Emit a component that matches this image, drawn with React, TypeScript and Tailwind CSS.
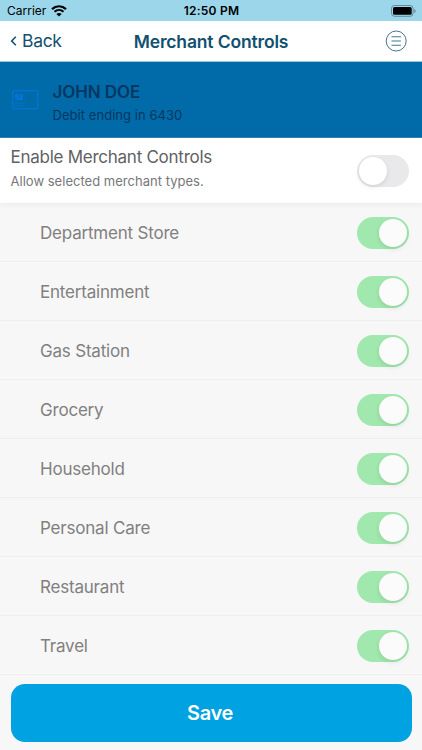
const merchants = [
  "Department Store",
  "Entertainment",
  "Gas Station",
  "Grocery",
  "Household",
  "Personal Care",
  "Restaurant",
  "Travel",
];

function Toggle({ on }: { on: boolean }) {
  return (
    <button
      role="switch"
      aria-checked={on}
      className={
        "flex h-8 w-[52px] shrink-0 items-center rounded-full px-0.5 " +
        (on ? "justify-end bg-[#a0e8ad]" : "justify-start bg-[#e9e9eb]")
      }
    >
      <span
        className={
          "size-7 rounded-full shadow-[0_2px_5px_rgba(0,0,0,0.1)] " +
          (on ? "bg-[#fbfbfb]" : "bg-white")
        }
      />
    </button>
  );
}

function StatusBar() {
  return (
    <div className="grid h-[21px] grid-cols-3 items-center bg-[#9bd6ea] pl-[7px] pr-[6px] text-black">
      <div className="flex items-center gap-[5px]">
        <span className="text-[12px] leading-[21px]">Carrier</span>
        <svg width="16" height="12" viewBox="0 0 16 12" fill="none">
          <path d="M1 4.1C5 .3 11 .3 15 4.1" stroke="currentColor" strokeWidth="2.2" />
          <path d="M3.5 6.8C6.1 4.4 9.9 4.4 12.5 6.8" stroke="currentColor" strokeWidth="2" />
          <path d="M8 11.6 5.4 9C6.9 7.7 9.1 7.7 10.6 9Z" fill="currentColor" />
        </svg>
      </div>
      <span className="text-center text-[12px] font-semibold leading-[21px] tracking-[0.25px]">12:50 PM</span>
      <svg className="justify-self-end" width="25" height="12" viewBox="0 0 25 12">
        <rect x="0.5" y="0.5" width="21.6" height="10.8" rx="3" fill="none" stroke="#628a97" />
        <rect x="2" y="2" width="18.7" height="7.8" rx="1.6" fill="#000" />
        <path d="M23.4 4v4c1.5-.6 1.5-3.4 0-4Z" fill="#54757f" />
      </svg>
    </div>
  );
}

export default function App() {
  return (
    <main className="flex h-[750px] w-[422px] flex-col overflow-hidden bg-[#f7f7f7] font-[Inter,'Liberation_Sans',sans-serif]">
      <StatusBar />
      <header className="grid h-[41px] grid-cols-[1fr_auto_1fr] items-center border-b border-[#a5c6d8] bg-white pl-[10px] pr-[10px] text-[#12506f]">
        <button className="flex items-center gap-[5px]">
          <svg width="7" height="10" viewBox="0 0 7 10" fill="none" stroke="currentColor" strokeWidth="1.6">
            <path d="M5.8 0.8 1.7 5l4.1 4.2" />
          </svg>
          <span className="text-[17.5px] leading-6 tracking-[-0.3px]">Back</span>
        </button>
        <h1 className="pt-px text-[17.5px] font-semibold leading-6 tracking-[-0.15px]">Merchant Controls</h1>
        <svg className="mr-[5px] justify-self-end" width="22" height="22" viewBox="0 0 22 22" fill="none" stroke="#47758f">
          <circle cx="11.2" cy="11" r="10" strokeWidth="1" />
          <path d="M6.5 6.7h9.4M6.5 11h9.4M6.5 15.3h9.4" strokeWidth="1.1" />
        </svg>
      </header>

      <section className="flex h-[76px] items-center border-b border-[#3483b2] bg-[#006ba8] pl-3 text-[#063760]">
        <svg width="27" height="20" viewBox="0 0 27 20" fill="none" stroke="#0075d8">
          <rect x="0.7" y="0.7" width="25" height="18" rx="1" strokeWidth="1.2" />
          <rect x="3" y="4" width="8" height="6" rx="1" fill="#0075d8" stroke="none" />
          <path d="M6.2 4v3h2.2V4M3 8h2.5" stroke="#006ba8" strokeWidth="0.6" />
          <path d="M3 13.2h10" strokeWidth="1" strokeDasharray="2 0.7" />
          <path d="M3 15.8h9.5" strokeWidth="0.8" strokeDasharray="4 0.7" />
        </svg>
        <div className="ml-[13.5px] pt-[7px]">
          <h2 className="text-[17px] font-semibold leading-[24px] tracking-[-0.1px]">JOHN DOE</h2>
          <p className="text-[13px] leading-[23px] tracking-[0.05px]">Debit ending in 6430</p>
        </div>
      </section>

      <section className="relative flex h-[65px] items-center justify-between bg-white pl-[10.5px] pr-[13.5px] shadow-[0_2px_6px_rgba(0,0,0,0.05)]">
        <div className="-mt-[3px]">
          <h3 className="text-[17px] leading-6 tracking-[-0.26px] text-[#606164]">Enable Merchant Controls</h3>
          <p className="text-[13px] leading-6 tracking-[0.02px] text-[#76777a]">Allow selected merchant types.</p>
        </div>
        <Toggle on={false} />
      </section>

      <ul>
        {merchants.map((name) => (
          <li
            key={name}
            className="flex h-[59px] items-center justify-between border-b border-[#efeff0] pl-10 pr-[13.5px] pt-[2px] text-[17px] leading-6 tracking-[-0.2px] text-[#808080]"
          >
            <span>{name}</span>
            <Toggle on />
          </li>
        ))}
      </ul>

      <footer className="pl-[10.5px] pr-[10.5px] pt-[8.5px]">
        <button className="h-[58px] w-full rounded-[14px] bg-[#00a2e2] pr-[2px] text-[20px] font-semibold tracking-[-0.3px] text-white">
          Save
        </button>
      </footer>
    </main>
  );
}
